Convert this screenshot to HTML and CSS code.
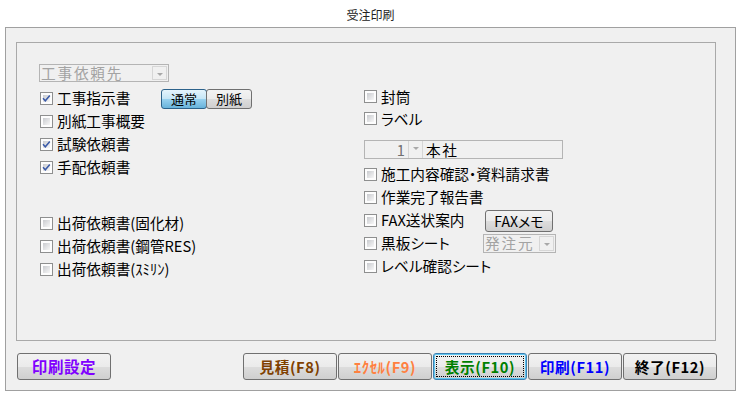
FILE: index.html
```html
<!DOCTYPE html>
<html lang="ja">
<head>
  <meta charset="UTF-8">
  <title>受注印刷</title>
  <link rel="stylesheet" href="styles.css">
</head>
<body>
  <div class="caption">受注印刷</div>

  <div class="panel">
    <div class="group">
      <div class="col col-left">
        <div class="combo combo-client">
          <span class="combo-text">工事依頼先</span>
          <span class="combo-arrow"></span>
        </div>

        <div class="row row-first">
          <label class="check check-toggle"><span class="cb on"><svg viewBox="0 0 11 11"><path d="M2 5.2 L4.3 7.8 L8.8 2.4"/></svg></span>工事指示書</label>
          <div class="toggle">
            <button class="btn btn-small active">通常</button><button class="btn btn-small">別紙</button>
          </div>
        </div>
        <div class="row">
          <label class="check"><span class="cb"></span>別紙工事概要</label>
        </div>
        <div class="row">
          <label class="check"><span class="cb on"><svg viewBox="0 0 11 11"><path d="M2 5.2 L4.3 7.8 L8.8 2.4"/></svg></span>試験依頼書</label>
        </div>
        <div class="row">
          <label class="check"><span class="cb on"><svg viewBox="0 0 11 11"><path d="M2 5.2 L4.3 7.8 L8.8 2.4"/></svg></span>手配依頼書</label>
        </div>

        <div class="row row-ship">
          <label class="check"><span class="cb"></span>出荷依頼書(固化材)</label>
        </div>
        <div class="row">
          <label class="check"><span class="cb"></span>出荷依頼書(鋼管RES)</label>
        </div>
        <div class="row">
          <label class="check"><span class="cb"></span>出荷依頼書(ｽﾐﾘﾝ)</label>
        </div>
      </div>

      <div class="col col-right">
        <div class="row row-short row-top">
          <label class="check"><span class="cb"></span>封筒</label>
        </div>
        <div class="row row-short">
          <label class="check"><span class="cb"></span>ラベル</label>
        </div>

        <div class="combo combo-office">
          <span class="combo-num">1</span>
          <span class="combo-arrow"></span>
          <span class="combo-label">本社</span>
        </div>

        <div class="row row-after-combo">
          <label class="check"><span class="cb"></span>施工内容確認・資料請求書</label>
        </div>
        <div class="row">
          <label class="check"><span class="cb"></span>作業完了報告書</label>
        </div>
        <div class="row">
          <label class="check check-fax"><span class="cb"></span>FAX送状案内</label>
          <button class="btn btn-memo">FAXメモ</button>
        </div>
        <div class="row">
          <label class="check check-board"><span class="cb"></span>黒板シート</label>
          <div class="combo combo-order">
            <span class="combo-text">発注元</span>
            <span class="combo-arrow"></span>
          </div>
        </div>
        <div class="row">
          <label class="check"><span class="cb"></span>レベル確認シート</label>
        </div>
      </div>
    </div>

    <div class="buttons">
      <button class="btn btn-main btn-setup">印刷設定</button>
      <div class="button-group">
        <button class="btn btn-main btn-estimate">見積(F8)</button>
        <button class="btn btn-main btn-excel">ｴｸｾﾙ(F9)</button>
        <button class="btn btn-main btn-show focus">表示(F10)</button>
        <button class="btn btn-main btn-print">印刷(F11)</button>
        <button class="btn btn-main btn-close">終了(F12)</button>
      </div>
    </div>
  </div>
</body>
</html>
```

FILE: styles.css
```css
body {
  margin: 0;
  background-color: #ffffff;
  color: #000;
  font-family: "Noto Sans CJK JP", sans-serif;
  font-size: 14.67px;
  font-feature-settings: "palt";
}
.caption {
  height: 27px;
  line-height: 29px;
  text-align: center;
  font-size: 12px;
  color: #222;
}
.panel {
  margin: 0 5px;
  height: 364px;
  box-sizing: border-box;
  border: 1px solid #a0a0a0;
  background-color: #f0f0f0;
}
.group {
  margin: 14px 19px 0 10px;
  height: 299px;
  box-sizing: border-box;
  border: 1px solid #a9a9a9;
  padding: 21px 0 0 22px;
  display: grid;
  grid-template-columns: 325px 1fr;
}
.col {
  display: flex;
  flex-direction: column;
  align-items: flex-start;
}
.row {
  height: 23px;
  display: flex;
  align-items: center;
}
.row-first {
  margin-top: 5px;
}
.row-ship {
  margin-top: 33px;
}
.row-short {
  height: 22px;
}
.row-top {
  margin-top: 22px;
}
.row-after-combo {
  margin-top: 4px;
}
.check {
  display: flex;
  align-items: center;
  gap: 4px;
  white-space: nowrap;
  line-height: 1;
}
.col-left .check {
  margin-left: 1px;
}
.check-toggle {
  width: 121px;
}
.check-fax {
  width: 121px;
}
.check-board {
  width: 119px;
}

/* checkbox */
.cb {
  width: 13px;
  height: 13px;
  box-sizing: border-box;
  border: 1px solid #8e8f8f;
  padding: 2px;
  background: linear-gradient(135deg, #c9cbcf, #f7f7f7) content-box, #fdfdfd;
  position: relative;
  flex: none;
}
.cb svg {
  position: absolute;
  left: 0;
  top: 0;
  width: 11px;
  height: 11px;
}
.cb svg path {
  fill: none;
  stroke: #3a5aa8;
  stroke-width: 1.5;
}

/* combos */
.combo {
  display: flex;
  align-items: stretch;
  height: 18px;
  box-sizing: border-box;
  border: 1px solid #b4b4b4;
  background-color: #f0f0f0;
  line-height: 16px;
}
.combo-text {
  flex: 1;
  color: #a3a3a3;
  letter-spacing: 1.8px;
  padding-left: 1px;
  white-space: nowrap;
}
.combo-arrow {
  width: 13px;
  margin: 1px;
  border: 1px solid #d6d6d6;
  position: relative;
  flex: none;
}
.combo-arrow::after {
  content: "";
  position: absolute;
  left: 4px;
  top: 6px;
  border-left: 3px solid transparent;
  border-right: 3px solid transparent;
  border-top: 3px solid #a8a8a8;
}
.combo-client {
  width: 130px;
}
.combo-order {
  width: 73px;
  height: 19px;
}
.combo-office {
  width: 199px;
  height: 19px;
  margin-top: 10px;
  line-height: 17px;
}
.combo-num {
  width: 40px;
  text-align: right;
  color: #707070;
  padding-right: 3px;
}
.combo-office .combo-arrow {
  margin: 0 1px 0 0;
  border-top: none;
  border-bottom: none;
}
.combo-label {
  padding-left: 2px;
  letter-spacing: 1.5px;
}

/* buttons */
.btn {
  font-family: "Noto Sans CJK JP", sans-serif;
  font-feature-settings: "palt";
  box-sizing: border-box;
  border: 1px solid #707070;
  border-radius: 3px;
  background: linear-gradient(#f2f2f2 0%, #ebebeb 50%, #dddddd 51%, #cfcfcf 100%);
  padding: 0;
  margin: 0;
  color: #000;
  cursor: pointer;
  white-space: nowrap;
}
.btn-small {
  width: 46px;
  height: 20px;
  font-size: 13px;
  line-height: 18px;
}
.toggle {
  display: flex;
}
.toggle .btn + .btn {
  margin-left: -1px;
}
.btn-small.active {
  border-color: #2c628b;
  background: linear-gradient(#e5f4fc 0%, #c4e5f6 50%, #98d1ef 51%, #68b3db 100%);
}
.btn-memo {
  width: 68px;
  height: 22px;
  font-size: 14px;
  line-height: 20px;
}
.buttons {
  margin: 12px 18px 0 11px;
  display: flex;
}
.button-group {
  margin-left: auto;
  display: flex;
  gap: 1px;
}
.btn-main {
  width: 94px;
  height: 27px;
  font-size: 14.67px;
  font-weight: bold;
  letter-spacing: 0.6px;
  line-height: 25px;
  position: relative;
}
.btn-setup {
  color: #8000ff;
  font-size: 15.5px;
}
.btn-estimate {
  color: #804000;
}
.btn-excel {
  color: #ff8040;
}
.btn-show {
  color: #008000;
}
.btn-print {
  color: #0000ff;
}
.btn-close {
  color: #000;
}
.btn.focus {
  border-color: #3c7fb1;
  box-shadow: inset 0 0 0 1px #5ec6f0;
}
.btn.focus::after {
  content: "";
  position: absolute;
  left: 2px;
  top: 2px;
  right: 2px;
  bottom: 2px;
  border: 1px dotted #000;
}
```
